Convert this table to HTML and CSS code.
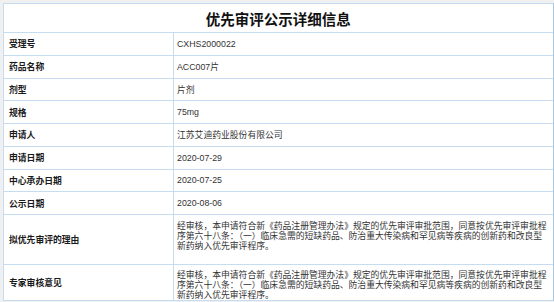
FILE: index.html
```html
<!DOCTYPE html>
<html lang="zh-CN">
<head>
<meta charset="utf-8">
<title>优先审评公示详细信息</title>
<link rel="stylesheet" href="styles.css">
</head>
<body>
<table class="info">
  <colgroup><col class="col-label"><col class="col-value"></colgroup>
  <tr class="title-row"><th colspan="2" class="title">优先审评公示详细信息</th></tr>
  <tr class="row"><td class="label">受理号</td><td class="value">CXHS2000022</td></tr>
  <tr class="row"><td class="label">药品名称</td><td class="value">ACC007片</td></tr>
  <tr class="row"><td class="label">剂型</td><td class="value">片剂</td></tr>
  <tr class="row"><td class="label">规格</td><td class="value">75mg</td></tr>
  <tr class="row"><td class="label">申请人</td><td class="value">江苏艾迪药业股份有限公司</td></tr>
  <tr class="row"><td class="label">申请日期</td><td class="value">2020-07-29</td></tr>
  <tr class="row"><td class="label">中心承办日期</td><td class="value">2020-07-25</td></tr>
  <tr class="row"><td class="label">公示日期</td><td class="value">2020-08-06</td></tr>
  <tr class="tall tall-a"><td class="label">拟优先审评的理由</td><td class="value long">经审核，本申请符合新《药品注册管理办法》规定的优先审评审批范围，同意按优先审评审批程序第六十八条：（一）临床急需的短缺药品、防治重大传染病和罕见病等疾病的创新药和改良型新药纳入优先审评程序。</td></tr>
  <tr class="tall tall-b"><td class="label">专家审核意见</td><td class="value long">经审核，本申请符合新《药品注册管理办法》规定的优先审评审批范围，同意按优先审评审批程序第六十八条：（一）临床急需的短缺药品、防治重大传染病和罕见病等疾病的创新药和改良型新药纳入优先审评程序。</td></tr>
</table>
</body>
</html>
```
FILE: styles.css
```css
html, body {
  margin: 0;
  background: #f0f0f0;
}
body {
  padding: 3px 1px 0 3px;
  font-family: "Liberation Sans", "Noto Sans CJK SC", sans-serif;
}
.info {
  width: 550px;
  border-collapse: collapse;
  background: #fff;
  table-layout: fixed;
  border-right: 2px solid #a9c9e9;
}
.col-label {
  width: 170px;
}
.col-value {
  width: 380px;
}
.info td, .info th {
  border: 1px solid #c6dcf1;
  padding: 0;
}
.title {
  height: 28px;
  font-size: 14.5px;
  font-weight: bold;
  color: #111;
  text-align: center;
  vertical-align: middle;
  border-bottom-width: 2px;
}
.row td {
  height: 21.75px;
}
.label {
  padding-left: 5px !important;
  font-size: 8.8px;
  font-weight: bold;
  color: #1a1a1a;
  vertical-align: middle;
}
.value {
  padding-left: 3px !important;
  font-size: 8.8px;
  color: #333;
  vertical-align: middle;
}
.long {
  line-height: 10px;
  vertical-align: top;
  padding-top: 5.5px !important;
  padding-right: 2px !important;
}
.tall-a td {
  height: 43px;
}
.tall-b td {
  height: 29px;
}
```
